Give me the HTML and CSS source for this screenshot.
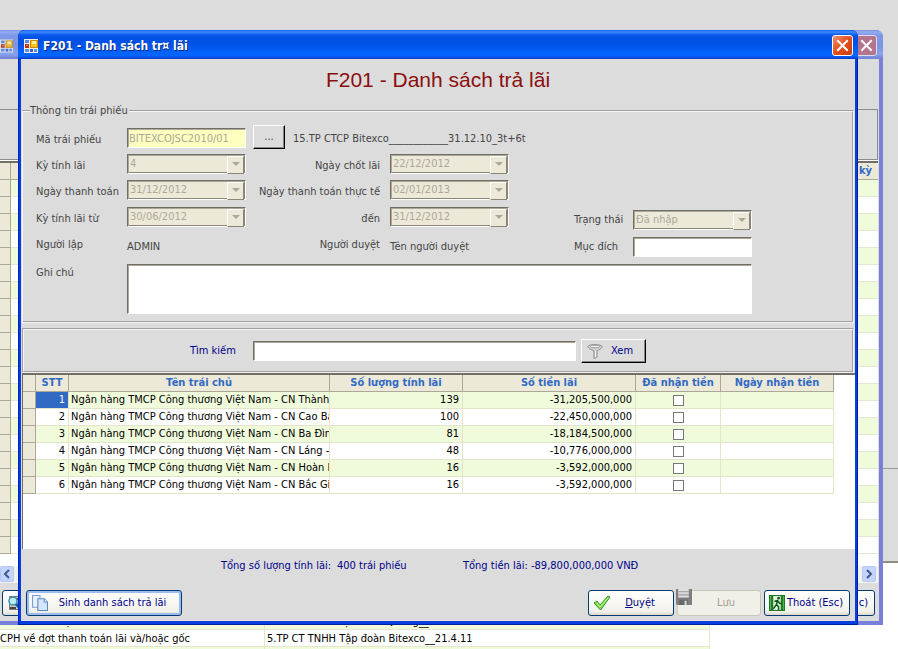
FILE: index.html
```html
<!DOCTYPE html>
<html lang="vi">
<head>
<meta charset="utf-8">
<title>F201 - Danh sách trả lãi</title>
<link rel="stylesheet" href="styles.css">
</head>
<body>
<svg class="defs" aria-hidden="true">
  <symbol id="i-app" viewBox="0 0 14 14">
    <path fill="#f5f0dc" d="M0 0h14v14H0z"/>
    <path fill="#5a8cf0" d="M1 1h4v3H1zM1 10h4v3H1zM10 10h3v3h-3z"/>
    <path fill="#2f66dc" d="M6 10h3v3H6z"/>
    <path fill="#b83418" d="M1 5h4v4H1z"/>
    <path fill="#f0805c" d="M2 6h2v1H2z"/>
    <path fill="#c88c08" d="M6 1h8v8H6z"/>
    <path fill="#f8c020" d="M7 2h6v6H7z"/>
    <path fill="#fff0a0" d="M8 2h4v3H8z"/>
  </symbol>
  <symbol id="i-x" viewBox="0 0 19 19"><path d="M5 5l9 9M14 5l-9 9" stroke="#fff" stroke-width="2" stroke-linecap="square" fill="none"/></symbol>
  <symbol id="i-check" viewBox="0 0 18 16"><path d="M1 8l3-2 3 4 8-9 2 1L7.500 15z" fill="#7ddc4a" stroke="#2f9a28" stroke-linejoin="round"/><path d="M4 8l3 4 8-9" fill="none" stroke="#c9f7a0"/></symbol>
  <symbol id="i-disk" viewBox="0 0 15 15"><path fill="#7f7f7f" d="M0 0h15v15H1L0 14z"/><path fill="#dedede" d="M2 0h10v8H2z"/><path stroke="#9a9a9a" d="M2 2.500h10M2 5.500h10"/><path fill="#696969" d="M3 10h8v5H3z"/><path fill="#d6d6d6" d="M8 11h2v4H8z"/></symbol>
  <symbol id="i-funnel" viewBox="0 0 16 16"><path fill="#d0d0d0" stroke="#8c8c8c" d="M1 3.500C1 1 15 1 15 3.500c0 1.500-1 2-5 4.500v6l-3 1.500V8C3 6 1 5 1 3.500z"/><ellipse cx="8" cy="3.500" rx="5" ry="1.200" fill="#f5f5f5" stroke="#a2a2a2"/><path d="M8.500 8v6" stroke="#fff"/></symbol>
  <symbol id="i-exit" viewBox="0 0 15 15"><path fill="#1c7a22" d="M0 0h15v15H0z"/><path fill="#e9f7e6" d="M4 1h7v13H4z"/><path fill="#58b552" d="M1 1h1v13H1zM13 1h1v13h-1z"/><circle cx="9" cy="3" r="1.300" fill="#125c18"/><path d="M5 6l3-1 2 3 2 0M8 5l-1 4 2 2v3M7 9l-3 4" fill="none" stroke="#125c18" stroke-width="1.500"/></symbol>
  <symbol id="i-copy" viewBox="0 0 15 15"><path fill="#e8f2ff" stroke="#7b9cd0" d="M.5.500h7v11h-7z"/><path fill="#d3e6fc" stroke="#5c88c4" d="M5.500 3.500h6l3 3v8h-9z"/><path fill="#fff" stroke="#5c88c4" d="M11.500 3.500v3h3"/></symbol>
  <symbol id="i-find" viewBox="0 0 16 16"><path fill="#c9c9c9" stroke="#777" d="M2.500 1.500h12v13h-12z"/><path fill="#444" d="M8 3h5v2H8zM3 12h6v2H3z"/><circle cx="6" cy="6" r="4" fill="#b9ecf4" stroke="#3c8ca8" stroke-width="1.500"/><path d="M9 9l5 5" stroke="#1b5c9c" stroke-width="3"/></symbol>
</svg>

<div class="desktop">
  <div class="desk-panel"><div class="desk-line"></div></div>
  <div class="desk-grid">
    <table class="ledger">
      <tbody>
        <tr><td class="ledger-what">Ghi chú về việc chốt danh sách</td><td>5.TP CTCP cơ điện Minh Quang__20.08.07</td></tr>
        <tr><td class="ledger-what">CPH về đợt thanh toán lãi và/hoặc gốc</td><td>5.TP CT TNHH Tập đoàn Bitexco__21.4.11</td></tr>
        <tr><td class="ledger-what"></td><td></td></tr>
      </tbody>
    </table>
  </div>

  <section class="window back">
    <header class="titlebar">
      <svg class="app-icon"><use href="#i-app"/></svg>
      <button class="close" type="button" aria-label="Đóng"><svg><use href="#i-x"/></svg></button>
    </header>
    <div class="client">
      <div class="back-box"></div>
      <div class="back-grid">
        <table>
          <thead><tr><th class="mark"></th><th>kỳ</th></tr></thead>
          <tbody>
            <tr><td class="mark"></td><td></td></tr><tr><td class="mark"></td><td></td></tr>
            <tr><td class="mark"></td><td></td></tr><tr><td class="mark"></td><td></td></tr>
            <tr><td class="mark"></td><td></td></tr><tr><td class="mark"></td><td></td></tr>
            <tr><td class="mark"></td><td></td></tr><tr><td class="mark"></td><td></td></tr>
            <tr><td class="mark"></td><td></td></tr><tr><td class="mark"></td><td></td></tr>
            <tr><td class="mark"></td><td></td></tr><tr><td class="mark"></td><td></td></tr>
            <tr><td class="mark"></td><td></td></tr><tr><td class="mark"></td><td></td></tr>
            <tr><td class="mark"></td><td></td></tr><tr><td class="mark"></td><td></td></tr>
            <tr><td class="mark"></td><td></td></tr><tr><td class="mark"></td><td></td></tr>
            <tr><td class="mark"></td><td></td></tr><tr><td class="mark"></td><td></td></tr>
            <tr><td class="mark"></td><td></td></tr><tr><td class="mark"></td><td></td></tr>
          </tbody>
        </table>
        <div class="scrollbar">
          <button type="button" aria-label="Cuộn trái"><svg viewBox="0 0 8 10"><path d="M6 1L2 5l4 4"/></svg></button>
          <button type="button" aria-label="Cuộn phải"><svg viewBox="0 0 8 10"><path d="M2 1l4 4-4 4"/></svg></button>
        </div>
      </div>
      <div class="back-actions">
        <button class="xp" type="button" aria-label="Xem chi tiết"><svg class="icon"><use href="#i-find"/></svg></button>
        <button class="xp last" type="button">c)</button>
      </div>
    </div>
  </section>

  <main class="window front">
    <header class="titlebar">
      <svg class="app-icon"><use href="#i-app"/></svg>
      <span class="caption">F201 - Danh sách tr¤ lãi</span>
      <button class="close" type="button" aria-label="Đóng"><svg><use href="#i-x"/></svg></button>
    </header>
    <form class="client">
      <h1>F201 - Danh sách trả lãi</h1>
      <fieldset class="info">
        <legend>Thông tin trái phiếu</legend>
        <div class="fields">
          <label class="c1" for="code">Mã trái phiếu</label>
          <input class="box code" id="code" value="BITEXCOJSC2010/01" disabled>
          <div class="bond"><button class="classic pick" type="button">...</button><span>15.TP CTCP Bitexco____________31.12.10_3t+6t</span></div>

          <label class="c1" for="term">Kỳ tính lãi</label>
          <div class="combo"><select id="term" disabled><option>4</option></select></div>
          <label class="c3" for="lock">Ngày chốt lãi</label>
          <div class="combo"><select id="lock" disabled><option>22/12/2012</option></select></div>

          <label class="c1" for="pay">Ngày thanh toán</label>
          <div class="combo"><select id="pay" disabled><option>31/12/2012</option></select></div>
          <label class="c3" for="real">Ngày thanh toán thực tế</label>
          <div class="combo"><select id="real" disabled><option>02/01/2013</option></select></div>

          <label class="c1" for="from">Kỳ tính lãi từ</label>
          <div class="combo"><select id="from" disabled><option>30/06/2012</option></select></div>
          <label class="c3" for="to">đến</label>
          <div class="combo"><select id="to" disabled><option>31/12/2012</option></select></div>

          <span class="c1">Người lập</span>
          <span class="value">ADMIN</span>
          <span class="c3">Người duyệt</span>
          <span class="value">Tên người duyệt</span>

          <label class="c1 top" for="note">Ghi chú</label>
          <textarea class="box note" id="note"></textarea>

          <div class="state">
            <label for="status">Trạng thái</label>
            <div class="combo"><select id="status" disabled><option>Đã nhập</option></select></div>
            <label for="aim">Mục đích</label>
            <input class="box" id="aim">
          </div>
        </div>
      </fieldset>

      <div class="search">
        <label for="find">Tìm kiếm</label>
        <input class="box" id="find">
        <button class="classic go" type="button"><svg class="icon"><use href="#i-funnel"/></svg>Xem</button>
      </div>

      <div class="grid">
        <table>
          <colgroup><col class="w-mark"><col class="w-no"><col class="w-name"><col class="w-qty"><col class="w-sum"><col class="w-got"><col class="w-date"></colgroup>
          <thead><tr><th></th><th>STT</th><th>Tên trái chủ</th><th>Số lượng tính lãi</th><th>Số tiền lãi</th><th>Đã nhận tiền</th><th>Ngày nhận tiền</th></tr></thead>
          <tbody>
            <tr><td class="mark"></td><td class="num on">1</td><td>Ngân hàng TMCP Công thương Việt Nam - CN Thành phố</td><td class="num">139</td><td class="num">-31,205,500,000</td><td class="tick"><input type="checkbox" aria-label="Đã nhận tiền 1"></td><td></td></tr>
            <tr><td class="mark"></td><td class="num">2</td><td>Ngân hàng TMCP Công thương Việt Nam - CN Cao Bằng</td><td class="num">100</td><td class="num">-22,450,000,000</td><td class="tick"><input type="checkbox" aria-label="Đã nhận tiền 2"></td><td></td></tr>
            <tr><td class="mark"></td><td class="num">3</td><td>Ngân hàng TMCP Công thương Việt Nam - CN Ba Đình</td><td class="num">81</td><td class="num">-18,184,500,000</td><td class="tick"><input type="checkbox" aria-label="Đã nhận tiền 3"></td><td></td></tr>
            <tr><td class="mark"></td><td class="num">4</td><td>Ngân hàng TMCP Công thương Việt Nam - CN Láng - Hòa</td><td class="num">48</td><td class="num">-10,776,000,000</td><td class="tick"><input type="checkbox" aria-label="Đã nhận tiền 4"></td><td></td></tr>
            <tr><td class="mark"></td><td class="num">5</td><td>Ngân hàng TMCP Công thương Việt Nam - CN Hoàn Kiếm</td><td class="num">16</td><td class="num">-3,592,000,000</td><td class="tick"><input type="checkbox" aria-label="Đã nhận tiền 5"></td><td></td></tr>
            <tr><td class="mark"></td><td class="num">6</td><td>Ngân hàng TMCP Công thương Việt Nam - CN Bắc Giang</td><td class="num">16</td><td class="num">-3,592,000,000</td><td class="tick"><input type="checkbox" aria-label="Đã nhận tiền 6"></td><td></td></tr>
          </tbody>
        </table>
      </div>

      <dl class="totals">
        <dt>Tổng số lượng tính lãi:</dt><dd>400 trái phiếu</dd>
        <dt>Tổng tiền lãi:</dt><dd>-89,800,000,000 VNĐ</dd>
      </dl>

      <div class="actions">
        <button class="xp make" type="button"><svg class="icon"><use href="#i-copy"/></svg><span>Sinh danh sách trả lãi</span></button>
        <button class="xp" type="button"><svg class="icon wide"><use href="#i-check"/></svg><span><u>D</u>uyệt</span></button>
        <button class="xp save" type="button" disabled><svg class="icon"><use href="#i-disk"/></svg><span>Lưu</span></button>
        <button class="xp" type="button"><svg class="icon"><use href="#i-exit"/></svg><span>Thoát (Esc)</span></button>
      </div>
    </form>
  </main>
</div>
</body>
</html>
```
FILE: styles.css
```css
:root {
  --face: #dcdcdc;
  --tan: #ece9d8;
  --stripe: #f0fbdc;
  --line: #aca899;
  --navy: #00008b;
}
* { box-sizing: border-box; }
body {
  margin: 0;
  color: #444;
  font: 11px/14px Tahoma, "DejaVu Sans Condensed", "DejaVu Sans", sans-serif;
}
button, input, select, textarea { font: inherit; margin: 0; border-radius: 0; }
button { padding: 0; color: var(--navy); }
h1, dl, dd { margin: 0; }
table { border-collapse: separate; border-spacing: 0; table-layout: fixed; }
.defs { display: none; }
.icon { width: 16px; height: 16px; flex: none; }
.icon.wide { width: 18px; }

.desktop { position: relative; height: 100vh; min-height: 649px; overflow: hidden; display: flex; flex-direction: column; background: #fff; }
.desk-panel { flex: 1; background: var(--face); border-bottom: 2px solid #918e80; display: flex; align-items: flex-end; }
.desk-line { flex: 1; height: 93px; border-top: 1px solid #999; }
.desk-grid { flex: none; height: 36px; margin-top: 50px; overflow: hidden; }
.ledger { width: 710px; color: #000; }
.ledger td { height: 17px; padding: 2px 2px 0; border: solid #e4e8c8; border-width: 0 1px 1px 0; white-space: nowrap; }
.ledger .ledger-what { width: 265px; padding-left: 0; }
.ledger tr:nth-child(odd) td { background: var(--stripe); }

.window { position: absolute; display: flex; flex-direction: column; border-radius: 7px 7px 0 0; }
.front { top: 30px; right: 40px; bottom: 24px; left: 18px; padding: 0 3px 4px; background: #0040e0; box-shadow: inset 1px 0 #0020c0, inset -1px -1px #001ea0; }
.back { top: 30px; right: 15px; bottom: 24px; left: 0; padding: 0 4px 4px 0; background: #7880dc; border-radius: 0 7px 0 0; }
.titlebar { flex: none; height: 29px; display: flex; align-items: center; margin: 0 -3px; padding: 2px 5px 0 6px; border-radius: 7px 7px 0 0; background: linear-gradient(#0a5cf0 0, #3c8cff 2px, #0a58ec 5px, #0050e4 9px, #0054ea 16px, #0464ff 23px, #0464fc 26px, #0038c8 29px); }
.back .titlebar { margin: 0 -4px 0 0; padding: 2px 6px 0 0; border-radius: 0 7px 0 0; background: linear-gradient(#7c90e4 0, #94acf0 2px, #8098e8 5px, #7c94e4 16px, #88a4f0 24px, #7080d0 29px); }
.app-icon { width: 14px; height: 14px; }
.back .app-icon { width: 13px; opacity: .85; }
.caption { margin-left: 5px; color: #fff; font-size: 12px; font-weight: bold; line-height: 16px; text-shadow: 1px 1px #0a2a80; }
.close { width: 21px; height: 21px; margin-left: auto; border: 1px solid #fff; border-radius: 3px; background: linear-gradient(135deg, #f0906c, #e2501e 50%, #c83c10); }
.close svg { display: block; width: 19px; height: 19px; }
.back .close { border-color: #dcdcf4; background: #b4748c; }
.client { flex: 1; display: flex; flex-direction: column; background: var(--face); }

.back-box { height: 51px; margin: 50px 1px 0 0; border: 1px solid #8c8c8c; border-left: 0; box-shadow: 0 1px #fff; }
.back-grid { flex: 1; margin: 1px 1px 0 0; border-top: 2px solid #716f64; background: #fff; display: flex; flex-direction: column; }
.back-grid table { width: 100%; }
.back-grid th, .back-grid td { height: 17px; padding: 0 6px; }
.back-grid th { color: #316ac5; text-align: right; background: var(--tan); border-bottom: 1px solid var(--line); }
.back-grid td { border-bottom: 1px solid #e4e8d0; }
.back-grid tbody tr:nth-child(odd) td { background: var(--stripe); }
.back-grid tr .mark, .back-grid tbody tr:nth-child(odd) .mark { width: 11px; padding: 0; background: var(--tan); border: solid var(--line); border-width: 0 1px 1px 0; }
.scrollbar { margin-top: auto; display: flex; justify-content: space-between; padding: 0 2px 1px 0; background: #f3f3ee; }
.scrollbar button { width: 14px; height: 16px; border: 1px solid #b4c8f4; border-radius: 2px; background: #c4d4fc; }
.scrollbar svg { display: block; width: 8px; height: 10px; margin: auto; fill: none; stroke: #40588c; stroke-width: 2; }
.back-actions { flex: none; display: flex; justify-content: space-between; padding: 7px 4px 5px 2px; }

h1 { height: 45px; padding-top: 9px; color: #8b0f0f; font: 21px/24px "Liberation Sans", sans-serif; text-align: center; }
.info { flex: none; min-width: 0; margin: 0 1px 0; padding: 10px 0 7px 12px; border: 2px groove #f4f4f4; border-left-width: 1px; }
legend { margin-left: -5px; padding: 0 1px 0 0; }
.fields { display: grid; grid-template-columns: 92px 119px 134px 10px 119px 124px 119px; grid-template-rows: 20px 20px 21px 20px 25px 50px; row-gap: 6px; }
.c1 { grid-column: 1; padding: 5px 0 0 1px; }
.c1.top { padding-top: 2px; }
.c3 { grid-column: 3; padding-top: 5px; text-align: right; white-space: nowrap; }
.c3 + * { grid-column: 5; }
.value { padding-top: 7px; white-space: nowrap; }
.box { width: 100%; height: 20px; padding: 0 1px; outline: 0; background: #fff; border: 1px solid; border-color: #716f64 #fff #fff #716f64; box-shadow: inset 1px 1px #aca899; }
.code { color: #aca899; background: #ffffc0; }
.bond { grid-column: 3 / 8; display: flex; align-items: center; gap: 8px; height: 24px; padding-left: 7px; margin-top: -3px; }
.bond span { padding-top: 4px; }
.classic { border: 1px solid; border-color: #fff #000 #000 #fff; box-shadow: inset -1px -1px #888; background: var(--face); height: 24px; }
.pick { width: 32px; color: #444; }
.combo { position: relative; height: 20px; }
.combo select { display: block; width: 100%; height: 20px; padding: 0 20px 0 2px; appearance: none; color: #aca899; opacity: 1; background: var(--tan); border: 1px solid; border-color: #716f64 #fff #fff #716f64; box-shadow: inset 1px 1px #aca899, inset -1px -1px #8a8778; }
.combo::before { content: ""; position: absolute; top: 2px; right: 2px; width: 15px; height: 16px; background: var(--tan); border: 1px solid; border-color: #fff #8a8778 #8a8778 #fff; pointer-events: none; }
.combo::after { content: ""; position: absolute; top: 8px; right: 6px; border: solid transparent; border-width: 4px 4px 0; border-top-color: #aca899; pointer-events: none; }
.note { grid-column: 2 / 8; height: 50px; resize: none; }
.state { grid-area: 4 / 6 / 6 / 8; display: grid; grid-template-columns: 59px 119px; grid-auto-rows: 20px; row-gap: 7px; justify-content: end; padding-top: 3px; align-items: center; }

.search { flex: none; display: flex; align-items: center; height: 45px; margin: 5px 1px 0; padding: 1px 0 0 166px; border: 2px groove #f4f4f4; color: var(--navy); }
.search label { width: 63px; }
.search .box { width: 323px; margin-right: 5px; }
.go { display: flex; align-items: center; gap: 8px; width: 65px; padding-left: 5px; }

.grid { flex: 1; border-top: 2px solid #716f64; border-left: 1px solid #716f64; margin: 0 0 0 1px; background: #fff; overflow: hidden; }
.grid table { width: 811px; color: #000; }
.w-mark { width: 13px; } .w-no { width: 33px; } .w-name { width: 261px; } .w-qty { width: 133px; }
.w-sum { width: 173px; } .w-got { width: 85px; } .w-date { width: 113px; }
.grid th, .grid td { height: 17px; padding: 0 2px; white-space: nowrap; overflow: hidden; border: solid #e4e4c8; border-width: 0 1px 1px 0; }
.grid th { color: #316ac5; background: var(--tan); border-color: var(--line); }
.grid tbody tr:nth-child(odd) td { background: var(--stripe); }
.grid tbody tr .mark, .grid tbody tr:nth-child(odd) .mark { background: var(--tan); border-color: var(--line); }
.grid tbody tr .on, .grid tbody tr:nth-child(odd) .on { color: #fff; background: #316ac5; }
.num { text-align: right; }
.grid .num { padding-right: 3px; }
.tick { text-align: center; line-height: 0; }
.tick input { display: block; margin: 0 auto; appearance: none; width: 11px; height: 11px; border: 1px solid #777; background: #fff; }

.totals { flex: none; display: grid; grid-template-columns: 116px 126px 68px auto; justify-content: start; height: 34px; align-items: center; padding-left: 200px; color: var(--navy); white-space: nowrap; }
.actions { flex: none; display: flex; gap: 3px; padding: 7px 5px 5px; }
.xp { display: flex; align-items: center; width: 86px; height: 26px; padding: 0 4px; border: 1px solid #003c74; border-radius: 3px; background: linear-gradient(#fff, #f2f1ea 85%, #dcd8cc); }
.xp span { flex: 1; text-align: center; white-space: nowrap; }
.make { width: 156px; margin-right: auto; box-shadow: inset 0 0 0 2px #9cbcf0; padding-left: 5px; }
.save { width: 84px; padding: 0; color: #a1a192; border-color: #c9c7ba; background: #f0f0e8; }
.save .icon { align-self: flex-start; margin: -2px 0 0 -2px; }
.back-actions .last { justify-content: flex-end; padding-right: 6px; }
```
